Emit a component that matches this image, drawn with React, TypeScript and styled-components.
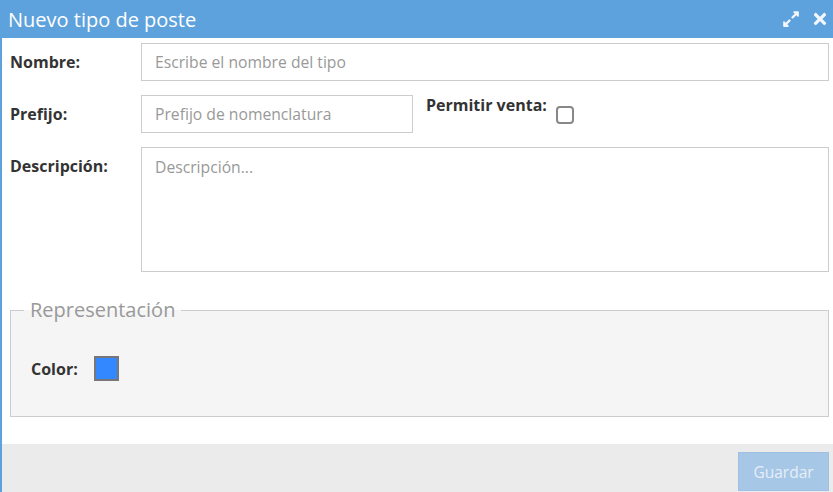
import React, { useState } from 'react';
import styled, { createGlobalStyle } from 'styled-components';
import { FaExpandAlt, FaTimes } from 'react-icons/fa';

// STYLES
const GlobalStyle = createGlobalStyle`
  html, body {
    margin: 0;
    padding: 0;
    background: #fff;
    font-family: 'Open Sans', 'Noto Sans', sans-serif;
  }
  * { box-sizing: border-box; }
`;

const Dialog = styled.div`
  width: 100vw;
  height: 100vh;
  display: flex;
  flex-direction: column;
  border-left: 2px solid #5da2dd;
  background: #fff;
  overflow: hidden;
`;

const TitleBar = styled.div`
  height: 38px;
  flex: none;
  background: #5da2dd;
  margin-left: -2px;
  padding: 0 4px 0 8px;
  display: flex;
  align-items: center;
  justify-content: space-between;
  color: #fff;
`;

const Title = styled.h1`
  margin: 0;
  font-size: 20px;
  font-weight: 400;
  letter-spacing: 0;
`;

const TitleActions = styled.div`
  display: flex;
  align-items: center;
  gap: 11px;
  color: #f2f7fc;

  svg { display: block; }
`;

const Body = styled.div`
  padding: 5px 4px 0 8px;
  flex: 1;
`;

const FormGrid = styled.div`
  display: grid;
  grid-template-columns: 131px 1fr;
  row-gap: 14px;
`;

const Label = styled.label<{ $top?: boolean }>`
  font-weight: 700;
  font-size: 16px;
  color: #333;
  display: flex;
  align-items: ${(p) => (p.$top ? 'flex-start' : 'center')};
  padding-top: ${(p) => (p.$top ? '8px' : '0')};
`;

const TextInput = styled.input<{ $width?: number }>`
  height: 38px;
  width: ${(p) => (p.$width ? `${p.$width}px` : '100%')};
  border: 1px solid #ccc;
  padding: 0 13px;
  font-family: inherit;
  font-size: 15.7px;
  color: #333;
  outline: none;

  &::placeholder { color: #999; }
`;

const TextArea = styled.textarea`
  height: 125px;
  width: 100%;
  border: 1px solid #ccc;
  padding: 8px 13px;
  font-family: inherit;
  font-size: 15.7px;
  color: #333;
  resize: none;
  outline: none;
  display: block;

  &::placeholder { color: #999; }
`;

const InlineRow = styled.div`
  display: flex;
  align-items: flex-start;
  gap: 13px;
`;

const SideField = styled.div`
  display: flex;
  align-items: flex-start;
  gap: 9px;
`;

const SideLabel = styled.span`
  font-weight: 700;
  font-size: 16px;
  color: #333;
  line-height: 20px;
`;

const Check = styled.input`
  appearance: none;
  width: 18px;
  height: 18px;
  margin: 11px 0 0 0;
  border: 2px solid #888;
  border-radius: 4px;
  background: #fff;
`;

const Fieldset = styled.fieldset`
  margin: 27px 0 0 0;
  padding: 14px 20px 35px 20px;
  border: 1px solid #ccc;
  background: #f5f5f5;
  min-width: 0;
`;

const Legend = styled.legend`
  margin-left: -7px;
  padding: 0 6px;
  font-size: 20px;
  color: #999;
  font-weight: 400;
  line-height: 22px;
`;

const ColorRow = styled.div`
  display: flex;
  align-items: center;
  gap: 16px;
  margin-top: 21px;
`;

const Swatch = styled.div<{ $color: string }>`
  width: 25px;
  height: 25px;
  border: 2px solid #777;
  background: ${(p) => p.$color};
`;

const Footer = styled.div`
  height: 48px;
  flex: none;
  background: #ebebeb;
  display: flex;
  justify-content: flex-end;
  align-items: flex-start;
  padding: 8px 4px 0 0;
`;

const SaveButton = styled.button`
  width: 91px;
  height: 39px;
  border: 1px solid #9ec0e2;
  background: #a7c7e7;
  color: #e6eef7;
  font-family: inherit;
  font-size: 15.5px;
`;

// COMPONENT
const App: React.FC = () => {
  const [name, setName] = useState('');
  const [prefix, setPrefix] = useState('');
  const [desc, setDesc] = useState('');
  const [sale, setSale] = useState(false);

  return (
    <>
      <GlobalStyle />
      <Dialog>
        <TitleBar>
          <Title>Nuevo tipo de poste</Title>
          <TitleActions>
            <FaExpandAlt size={18} />
            <FaTimes size={18} />
          </TitleActions>
        </TitleBar>

        <Body>
          <FormGrid>
            <Label>Nombre:</Label>
            <TextInput
              placeholder="Escribe el nombre del tipo"
              value={name}
              onChange={(e) => setName(e.target.value)}
            />

            <Label>Prefijo:</Label>
            <InlineRow>
              <TextInput
                $width={272}
                placeholder="Prefijo de nomenclatura"
                value={prefix}
                onChange={(e) => setPrefix(e.target.value)}
              />
              <SideField>
                <SideLabel>Permitir venta:</SideLabel>
                <Check type="checkbox" checked={sale} onChange={() => setSale(!sale)} />
              </SideField>
            </InlineRow>

            <Label $top>Descripción:</Label>
            <TextArea
              placeholder="Descripción..."
              value={desc}
              onChange={(e) => setDesc(e.target.value)}
            />
          </FormGrid>

          <Fieldset>
            <Legend>Representación</Legend>
            <ColorRow>
              <Label>Color:</Label>
              <Swatch $color="#3388ff" />
            </ColorRow>
          </Fieldset>
        </Body>

        <Footer>
          <SaveButton disabled>Guardar</SaveButton>
        </Footer>
      </Dialog>
    </>
  );
};

export default App;
